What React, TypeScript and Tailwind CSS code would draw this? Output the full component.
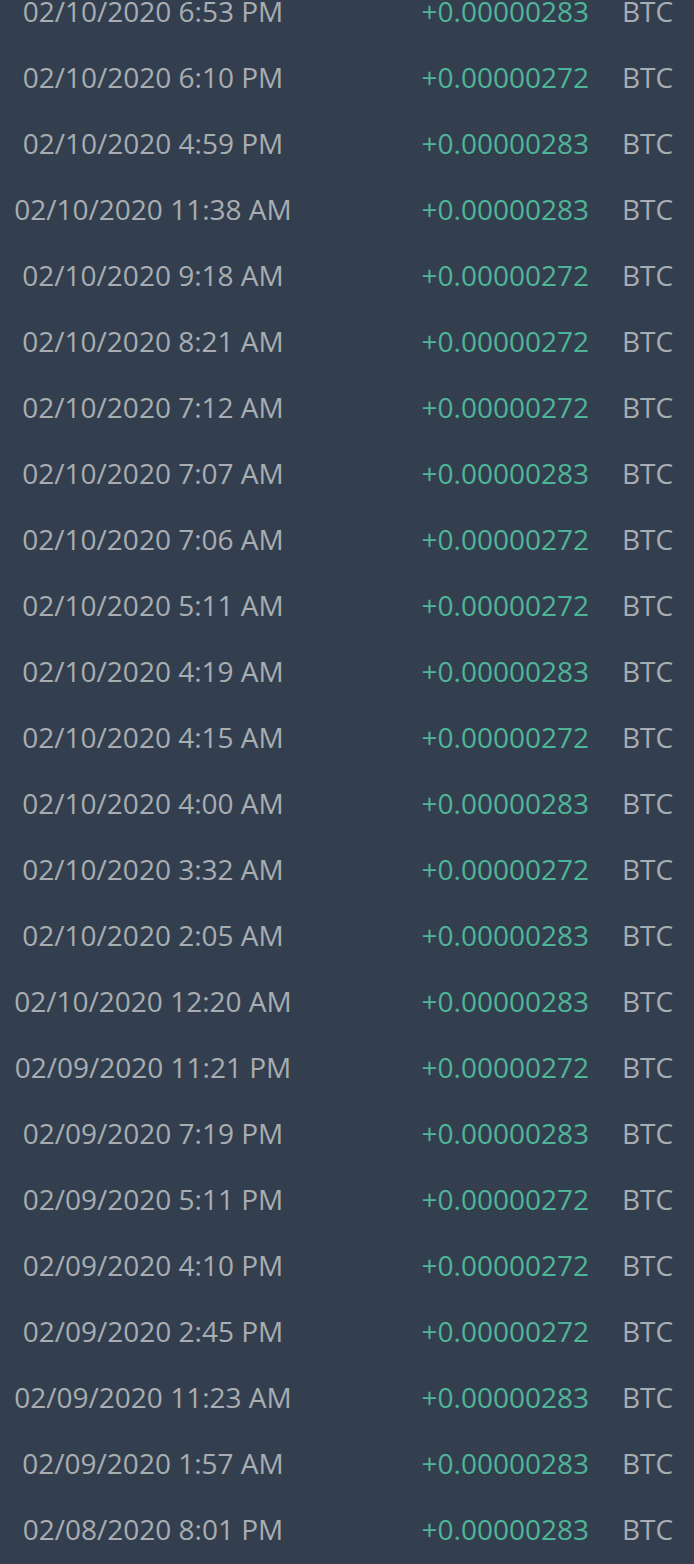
import React from "react";

const rows: [string, string][] = [
  ["02/10/2020 6:53 PM", "283"],
  ["02/10/2020 6:10 PM", "272"],
  ["02/10/2020 4:59 PM", "283"],
  ["02/10/2020 11:38 AM", "283"],
  ["02/10/2020 9:18 AM", "272"],
  ["02/10/2020 8:21 AM", "272"],
  ["02/10/2020 7:12 AM", "272"],
  ["02/10/2020 7:07 AM", "283"],
  ["02/10/2020 7:06 AM", "272"],
  ["02/10/2020 5:11 AM", "272"],
  ["02/10/2020 4:19 AM", "283"],
  ["02/10/2020 4:15 AM", "272"],
  ["02/10/2020 4:00 AM", "283"],
  ["02/10/2020 3:32 AM", "272"],
  ["02/10/2020 2:05 AM", "283"],
  ["02/10/2020 12:20 AM", "283"],
  ["02/09/2020 11:21 PM", "272"],
  ["02/09/2020 7:19 PM", "283"],
  ["02/09/2020 5:11 PM", "272"],
  ["02/09/2020 4:10 PM", "272"],
  ["02/09/2020 2:45 PM", "272"],
  ["02/09/2020 11:23 AM", "283"],
  ["02/09/2020 1:57 AM", "283"],
  ["02/08/2020 8:01 PM", "283"],
];

export default function App() {
  return (
    <div className="w-[694px] h-[1564px] overflow-hidden bg-[#333f4f] font-['Open_Sans',sans-serif] text-[28px] leading-none">
      <div className="-mt-[22px] flex flex-col">
        {rows.map(([d, a], i) => (
          <div key={i} className="h-[66px] flex items-center whitespace-nowrap">
            <div className="w-[306px] text-center text-[#a9adb1]">{d}</div>
            <div className="w-[283px] text-right text-[#4fb597]">+0.00000{a}</div>
            <div className="ml-[33px] text-[#a9adb1]">BTC</div>
          </div>
        ))}
      </div>
    </div>
  );
}
